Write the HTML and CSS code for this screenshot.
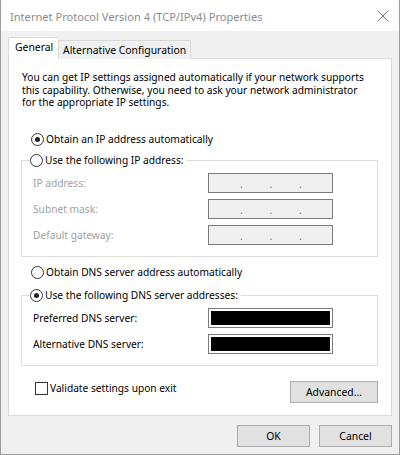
FILE: index.html
```html
<!DOCTYPE html>
<html lang="en">
<head>
<meta charset="UTF-8" />
<title>Internet Protocol Version 4 (TCP/IPv4) Properties</title>
<link rel="stylesheet" href="styles.css">
</head>
<body>
    <div class="window">
        <div class="titlebar">
            <span class="title">Internet Protocol Version 4 (TCP/IPv4) Properties</span>
            <svg class="close" width="12" height="12" viewBox="0 0 12 12">
                <path d="M0.5 0.5 L11.5 11.5 M11.5 0.5 L0.5 11.5" stroke="#7a7a7a" stroke-width="1" fill="none"/>
            </svg>
        </div>
        <div class="content">
            <div class="tabs">
                <div class="tab active">General</div>
                <div class="tab">Alternative Configuration</div>
            </div>
            <div class="panel">
                <p class="intro">You can get IP settings assigned automatically if your network supports this capability. Otherwise, you need to ask your network administrator for the appropriate IP settings.</p>

                <div class="option first">
                    <span class="radio checked"></span>
                    <span>Obtain an IP address automatically</span>
                </div>

                <fieldset class="group">
                    <legend>
                        <span class="radio"></span>
                        <span>Use the following IP address:</span>
                    </legend>
                    <div class="row disabled">
                        <span class="label">IP address:</span>
                        <span class="ipbox"><i>.</i><i>.</i><i>.</i></span>
                    </div>
                    <div class="row disabled">
                        <span class="label">Subnet mask:</span>
                        <span class="ipbox"><i>.</i><i>.</i><i>.</i></span>
                    </div>
                    <div class="row disabled">
                        <span class="label">Default gateway:</span>
                        <span class="ipbox"><i>.</i><i>.</i><i>.</i></span>
                    </div>
                </fieldset>

                <div class="option dns">
                    <span class="radio"></span>
                    <span>Obtain DNS server address automatically</span>
                </div>

                <fieldset class="group dns-group">
                    <legend>
                        <span class="radio checked"></span>
                        <span>Use the following DNS server addresses:</span>
                    </legend>
                    <div class="row">
                        <span class="label">Preferred DNS server:</span>
                        <span class="ipbox filled"></span>
                    </div>
                    <div class="row">
                        <span class="label">Alternative DNS server:</span>
                        <span class="ipbox filled"></span>
                    </div>
                </fieldset>

                <div class="bottom-row">
                    <div class="check-line">
                        <span class="checkbox"></span>
                        <span>Validate settings upon exit</span>
                    </div>
                    <button class="btn advanced">Advanced...</button>
                </div>
            </div>
            <div class="footer">
                <button class="btn">OK</button>
                <button class="btn">Cancel</button>
            </div>
        </div>
    </div>
</body>
</html>
```

FILE: styles.css
```css
body, html {
    margin: 0;
    padding: 0;
    background: #f0f0f0;
    font-family: "Noto Sans", "Open Sans", Arial, sans-serif;
    font-size: 10.2px;
    color: #000;
}

.window {
    width: 400px;
    height: 455px;
    box-sizing: border-box;
    border: 1px solid #9a9a9a;
    border-top: none;
    background: #f0f0f0;
    display: flex;
    flex-direction: column;
}

.titlebar {
    height: 31px;
    background: #fff;
    display: flex;
    align-items: center;
    justify-content: space-between;
    padding: 0 9px 0 9px;
    flex-shrink: 0;
}

.title {
    font-size: 11.1px;
    color: #8c8c8c;
    margin-top: 1px;
}

.close {
    margin-right: 1px;
}

.content {
    padding: 7px 7px 0 7px;
}

/* tabs */
.tabs {
    display: flex;
    align-items: flex-end;
    height: 21px;
    position: relative;
    z-index: 2;
}

.tab {
    height: 18px;
    line-height: 19px;
    padding: 0 4px;
    border: 1px solid #d9d9d9;
    border-bottom: none;
    background: #f0f0f0;
    font-size: 10.4px;
}

.tab.active {
    height: 21px;
    line-height: 19px;
    background: #fff;
    padding: 0 6px;
    width: 37px;
    border-right: none;
}

.panel {
    background: #fff;
    border: 1px solid #d9d9d9;
    height: 356px;
    margin-top: -1px;
    padding: 0 12px 0 13px;
}

.intro {
    margin: 12px 0 0 0;
    line-height: 12.7px;
    width: 350px;
}

.option {
    display: flex;
    align-items: center;
    height: 14px;
    margin-left: 9px;
}

.option.first {
    margin-top: 23px;
}

.option.dns {
    margin-top: 8px;
}

.radio {
    width: 11px;
    height: 11px;
    border: 1px solid #333;
    border-radius: 50%;
    box-sizing: content-box;
    margin-right: 2px;
    position: relative;
    flex-shrink: 0;
}

.radio.checked::after {
    content: "";
    position: absolute;
    left: 3px;
    top: 3px;
    width: 5px;
    height: 5px;
    border-radius: 50%;
    background: #222;
}

/* group box */
.group {
    margin: 7px 0 0 -1px;
    padding: 6px 11px 11px 11px;
    border: 1px solid #dcdcdc;
    width: 357px;
    box-sizing: border-box;
    min-width: 0;
}

.group legend {
    display: flex;
    align-items: center;
    height: 14px;
    padding: 0 3px 0 0;
    margin-left: -3px;
}

.dns-group {
    margin-top: 9px;
}

.row {
    display: flex;
    align-items: center;
    height: 20px;
}

.row + .row {
    margin-top: 6px;
}

.label {
    width: 175px;
}

.row.disabled .label {
    color: #a0a0a0;
}

.ipbox {
    width: 125px;
    height: 20px;
    box-sizing: border-box;
    border: 1px solid #7a7a7a;
    background: #f0f0f0;
    display: flex;
    padding-left: 31px;
    gap: 24.5px;
    font-size: 10px;
    color: #777;
    line-height: 20px;
}

.ipbox i {
    font-style: normal;
    width: 5px;
}

.ipbox.filled {
    background: #000;
    box-shadow: inset 0 0 0 2px #fff;
    border-color: #7a7a7a;
}

.bottom-row {
    display: flex;
    justify-content: space-between;
    align-items: flex-start;
    margin-top: 15px;
    padding-left: 13px;
}

.check-line {
    display: flex;
    align-items: center;
    height: 14px;
}

.checkbox {
    width: 13px;
    height: 13px;
    border: 1px solid #333;
    margin-right: 2px;
    box-sizing: border-box;
}

.btn {
    font-family: inherit;
    font-size: 10.4px;
    background: #e1e1e1;
    border: 1px solid #adadad;
    height: 22px;
    width: 73px;
    padding: 0;
    color: #000;
}

.btn.advanced {
    width: 88px;
    margin-right: 1px;
}

.footer {
    display: flex;
    justify-content: flex-end;
    gap: 9px;
    margin-top: 9px;
}
```
